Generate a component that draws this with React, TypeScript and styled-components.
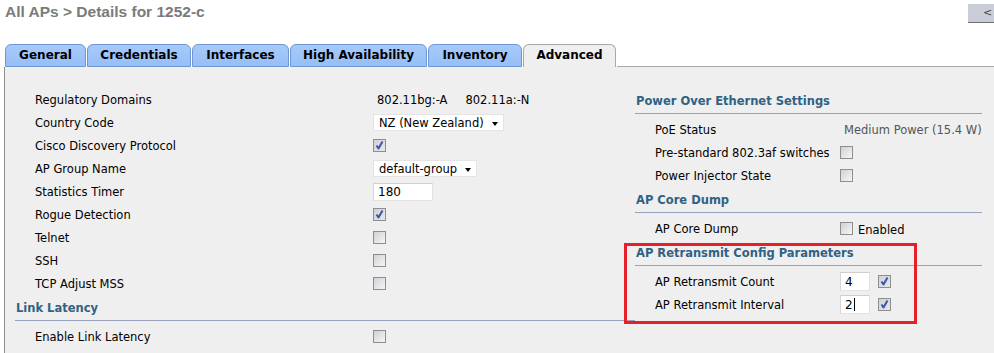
import React from 'react';
import styled, { createGlobalStyle } from 'styled-components';

const Global = createGlobalStyle`
  html, body { margin: 0; padding: 0; background: #ffffff; }
  body {
    font-family: "DejaVu Sans", Verdana, sans-serif;
    font-size: 11.5px;
    color: #000;
    overflow: hidden;
  }
`;

const Page = styled.div`
  position: relative;
  width: 994px;
  height: 353px;
  overflow: hidden;
`;

const Header = styled.div`
  display: flex;
  justify-content: space-between;
  align-items: flex-start;
  height: 44px;
`;

const Title = styled.h1`
  margin: 0;
  padding: 3px 0 0 5px;
  font: bold 15.5px "Liberation Sans", Arial, sans-serif;
  line-height: 18px;
  color: #7b7b7b;
`;

const BackButton = styled.div`
  margin-top: 4px;
  width: 26px;
  height: 19px;
  box-sizing: border-box;
  padding: 0 0 0 15px;
  background: #c9cdd8;
  border-bottom: 1px solid #6f6f6f;
  font: 11px "DejaVu Sans", sans-serif;
  line-height: 18px;
  color: #444;
  white-space: nowrap;
`;

const TabBar = styled.div`
  display: flex;
  align-items: flex-end;
  gap: 1px;
  padding-left: 5px;
  height: 23px;
`;

const Tab = styled.div<{ $active?: boolean; $w: number }>`
  width: ${p => p.$w}px;
  height: 23px;
  box-sizing: border-box;
  border: 1px solid ${p => (p.$active ? '#a8a8a8' : '#6f97d3')};
  border-bottom: ${p => (p.$active ? 'none' : '1px solid #6f97d3')};
  border-radius: 6px 6px 0 0;
  background: ${p => (p.$active ? '#efefef' : 'linear-gradient(#a6c9f9, #97bff6)')};
  font: bold 12px "DejaVu Sans", Verdana, sans-serif;
  line-height: 21px;
  text-align: center;
  white-space: nowrap;
`;

const TabFiller = styled.div`
  flex: 1;
  height: 23px;
  box-sizing: border-box;
  border-bottom: 1px solid #a8a8a8;
`;

const Panel = styled.div`
  margin-left: 4px;
  border-left: 1px solid #8f8f8f;
  background: #efefef;
  height: 290px;
  padding: 21px 12px 0 10px;
  display: grid;
  grid-template-columns: 620px 347px;
  align-items: start;
`;

const Column = styled.div<{ $top?: number }>`
  padding-top: ${p => p.$top ?? 0}px;
`;

const SectionHeading = styled.div`
  height: 25px;
  box-sizing: border-box;
  border-bottom: 1px solid #98a2bc;
  padding-left: 1px;
  font: bold 11.5px "DejaVu Sans", Verdana, sans-serif;
  line-height: 24px;
  color: #2f6283;
`;

const RowGroup = styled.div<{ $first?: boolean }>`
  padding: ${p => (p.$first ? 0 : 4)}px 0 1px;
`;

const Row = styled.div<{ $label: number }>`
  display: grid;
  grid-template-columns: ${p => p.$label}px auto;
  align-items: center;
  height: 23px;
  padding-left: 20px;
`;

const Label = styled.span`
  white-space: nowrap;
`;

const Cell = styled.div`
  display: flex;
  align-items: center;
  gap: 8px;
  white-space: nowrap;
`;

const StaticValue = styled.span<{ $muted?: boolean }>`
  padding-left: 4px;
  color: ${p => (p.$muted ? '#555' : '#000')};
`;

const Spacer = styled.span`
  display: inline-block;
  width: 18px;
`;

const BoxWrap = styled.span<{ $checked?: boolean }>`
  display: inline-flex;
  align-items: center;
  justify-content: center;
  width: 13px;
  height: 13px;
  box-sizing: border-box;
  border: 1px solid #8e8e8e;
  background: ${p =>
    p.$checked
      ? 'linear-gradient(135deg, #d0d2d8 0%, #e6e7ea 100%)'
      : 'linear-gradient(135deg, #cfd1d6 0%, #f6f6f6 100%)'};
`;

const CheckText = styled.span`
  position: relative;
  top: 1px;
  margin-left: -3px;
`;

const SelectBox = styled.div<{ $w: number }>`
  display: flex;
  align-items: center;
  justify-content: space-between;
  width: ${p => p.$w}px;
  height: 17px;
  box-sizing: border-box;
  padding: 0 5px 0 5px;
  background: #fff;
  border: 1px solid #e4e4e4;
  font-size: 11.5px;
`;

const Arrow = styled.span`
  width: 0;
  height: 0;
  margin-top: 2px;
  border-left: 3.5px solid transparent;
  border-right: 3.5px solid transparent;
  border-top: 4px solid #000;
`;

const TextInput = styled.div<{ $w: number; $h: number }>`
  display: flex;
  align-items: center;
  width: ${p => p.$w}px;
  height: ${p => p.$h}px;
  box-sizing: border-box;
  padding-left: 4px;
  background: #fff;
  border: 1px solid #e2e2e2;
  border-top-color: #cfcfcf;
  border-left-color: #d6d6d6;
  font-size: 12px;
`;

const Caret = styled.span`
  display: inline-block;
  width: 1px;
  height: 13px;
  margin-left: 1px;
  background: #000;
`;

const Highlight = styled.div`
  position: absolute;
  left: 624px;
  top: 243px;
  width: 293px;
  height: 81px;
  box-sizing: border-box;
  border: 3px solid #e6202b;
  pointer-events: none;
`;

const Checkbox: React.FC<{ checked?: boolean }> = ({ checked }) => (
  <BoxWrap $checked={checked}>
    {checked && (
      <svg width="11" height="11" viewBox="0 0 11 11">
        <path d="M2.5 5.5 L4.5 8.5 L8.5 1.5" fill="none" stroke="#3b56a6" strokeWidth="2" strokeLinejoin="round" />
      </svg>
    )}
  </BoxWrap>
);

const Select: React.FC<{ w: number; value: string }> = ({ w, value }) => (
  <SelectBox $w={w}>
    <span>{value}</span>
    <Arrow />
  </SelectBox>
);

const tabs = [
  { label: 'General', w: 81 },
  { label: 'Credentials', w: 104 },
  { label: 'Interfaces', w: 97 },
  { label: 'High Availability', w: 137 },
  { label: 'Inventory', w: 94 },
  { label: 'Advanced', w: 93, active: true },
];

const L = 338;
const R = 185;

export default function App() {
  return (
    <Page>
      <Global />
      <Header>
        <Title>All APs &gt; Details for 1252-c</Title>
        <BackButton>&lt;</BackButton>
      </Header>
      <TabBar>
        {tabs.map(t => (
          <Tab key={t.label} $w={t.w} $active={t.active}>
            {t.label}
          </Tab>
        ))}
        <TabFiller />
      </TabBar>
      <Panel>
        <Column>
          <RowGroup $first>
            <Row $label={L}>
              <Label>Regulatory Domains</Label>
              <Cell>
                <StaticValue>
                  802.11bg:-A<Spacer />802.11a:-N
                </StaticValue>
              </Cell>
            </Row>
            <Row $label={L}>
              <Label>Country Code</Label>
              <Cell>
                <Select w={131} value="NZ (New Zealand)" />
              </Cell>
            </Row>
            <Row $label={L}>
              <Label>Cisco Discovery Protocol</Label>
              <Cell>
                <Checkbox checked />
              </Cell>
            </Row>
            <Row $label={L}>
              <Label>AP Group Name</Label>
              <Cell>
                <Select w={104} value="default-group" />
              </Cell>
            </Row>
            <Row $label={L}>
              <Label>Statistics Timer</Label>
              <Cell>
                <TextInput $w={60} $h={18}>180</TextInput>
              </Cell>
            </Row>
            <Row $label={L}>
              <Label>Rogue Detection</Label>
              <Cell>
                <Checkbox checked />
              </Cell>
            </Row>
            <Row $label={L}>
              <Label>Telnet</Label>
              <Cell>
                <Checkbox />
              </Cell>
            </Row>
            <Row $label={L}>
              <Label>SSH</Label>
              <Cell>
                <Checkbox />
              </Cell>
            </Row>
            <Row $label={L}>
              <Label>TCP Adjust MSS</Label>
              <Cell>
                <Checkbox />
              </Cell>
            </Row>
          </RowGroup>
          <SectionHeading>Link Latency</SectionHeading>
          <RowGroup>
            <Row $label={L}>
              <Label>Enable Link Latency</Label>
              <Cell>
                <Checkbox />
              </Cell>
            </Row>
          </RowGroup>
        </Column>
        <Column $top={1}>
          <SectionHeading>Power Over Ethernet Settings</SectionHeading>
          <RowGroup>
            <Row $label={R}>
              <Label>PoE Status</Label>
              <Cell>
                <StaticValue $muted>Medium Power (15.4 W)</StaticValue>
              </Cell>
            </Row>
            <Row $label={R}>
              <Label>Pre-standard 802.3af switches</Label>
              <Cell>
                <Checkbox />
              </Cell>
            </Row>
            <Row $label={R}>
              <Label>Power Injector State</Label>
              <Cell>
                <Checkbox />
              </Cell>
            </Row>
          </RowGroup>
          <SectionHeading>AP Core Dump</SectionHeading>
          <RowGroup>
            <Row $label={R}>
              <Label>AP Core Dump</Label>
              <Cell>
                <Checkbox />
                <CheckText>Enabled</CheckText>
              </Cell>
            </Row>
          </RowGroup>
          <SectionHeading>AP Retransmit Config Parameters</SectionHeading>
          <RowGroup>
            <Row $label={R}>
              <Label>AP Retransmit Count</Label>
              <Cell>
                <TextInput $w={30} $h={19}>4</TextInput>
                <Checkbox checked />
              </Cell>
            </Row>
            <Row $label={R}>
              <Label>AP Retransmit Interval</Label>
              <Cell>
                <TextInput $w={30} $h={19}>
                  2<Caret />
                </TextInput>
                <Checkbox checked />
              </Cell>
            </Row>
          </RowGroup>
        </Column>
      </Panel>
      <Highlight />
    </Page>
  );
}
